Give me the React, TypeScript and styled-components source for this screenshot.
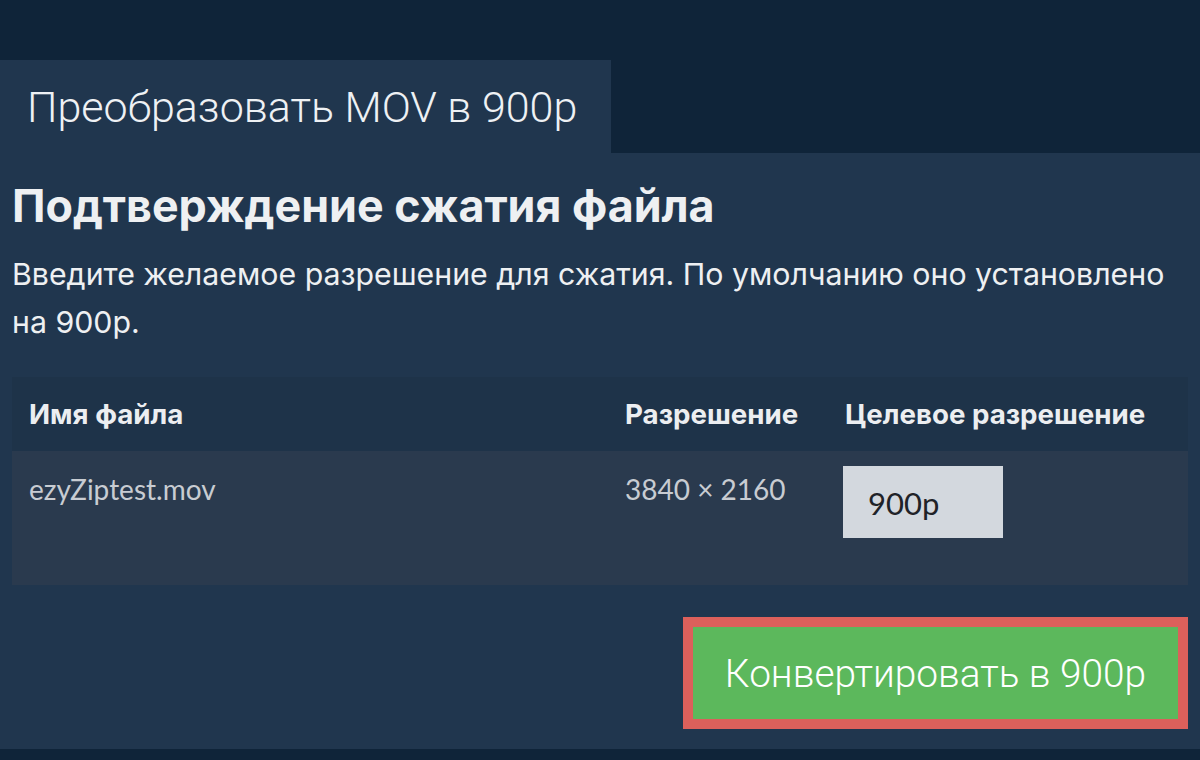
import React from "react";
import styled, { createGlobalStyle } from "styled-components";

const Global = createGlobalStyle`
  html, body { margin: 0; padding: 0; background: #0f2439; }
  body { font-family: Inter, "Noto Sans", sans-serif; }
  * { box-sizing: border-box; }
`;

const Page = styled.div`
  width: 1200px;
  height: 760px;
  background: #0f2439;
  padding-top: 60px;
  display: flex;
  flex-direction: column;
`;

const Tab = styled.div`
  width: 611px;
  height: 93px;
  background: #20364e;
  display: flex;
  align-items: center;
  padding-left: 27px;
  font-family: Roboto, sans-serif;
  font-weight: 300;
  font-size: 43px;
  color: #eef1f4;
`;

const Panel = styled.div`
  width: 1200px;
  height: 596px;
  background: #20364e;
  padding: 0 12px 20px 12px;
  display: flex;
  flex-direction: column;
`;

const Heading = styled.h1`
  margin: 29px 0 0 0;
  font-family: Inter, sans-serif;
  font-weight: 700;
  font-size: 44.8px;
  line-height: 48px;
  color: #eef0f2;
`;

const Intro = styled.p`
  margin: 20px 0 0 0;
  font-family: Inter, sans-serif;
  font-weight: 400;
  font-size: 30.3px;
  line-height: 48px;
  color: #eef0f2;
`;

const Table = styled.div`
  margin-top: 31px;
  display: grid;
  grid-template-columns: 596px 220px 1fr;
`;

const HeadCell = styled.div`
  background: #1e3349;
  height: 74px;
  display: flex;
  align-items: center;
  padding-left: 17px;
  font-family: Inter, sans-serif;
  font-weight: 700;
  font-size: 27.7px;
  color: #eceef1;
`;

const Cell = styled.div`
  background: #2a3a4e;
  height: 134px;
  padding: 23px 0 0 17px;
  font-family: Lato, sans-serif;
  font-size: 28px;
  line-height: 30px;
  color: #c8ccd2;
`;

const InputCell = styled(Cell)`
  padding-top: 15px;
  padding-left: 15px;
`;

const ResInput = styled.div`
  width: 160px;
  height: 72px;
  background: #d3d8de;
  display: flex;
  align-items: center;
  padding-left: 25px;
  font-family: Lato, sans-serif;
  font-size: 31px;
  color: #1f2328;
  padding-top: 2px;
`;

const Actions = styled.div`
  margin-top: auto;
  display: flex;
  justify-content: flex-end;
`;

const ConvertButton = styled.button`
  width: 505px;
  height: 112px;
  border: 10px solid #dc605b;
  background: #5cb85c;
  color: #ffffff;
  font-family: Roboto, sans-serif;
  font-weight: 300;
  font-size: 38.8px;
  padding: 0;
  cursor: pointer;
`;

export default function App() {
  return (
    <>
      <Global />
      <Page>
        <Tab>Преобразовать MOV в 900p</Tab>
        <Panel>
          <Heading>Подтверждение сжатия файла</Heading>
          <Intro>
            Введите желаемое разрешение для сжатия. По умолчанию оно установлено
            на 900p.
          </Intro>
          <Table>
            <HeadCell>Имя файла</HeadCell>
            <HeadCell>Разрешение</HeadCell>
            <HeadCell>Целевое разрешение</HeadCell>
            <Cell>ezyZiptest.mov</Cell>
            <Cell>3840 × 2160</Cell>
            <InputCell>
              <ResInput>900p</ResInput>
            </InputCell>
          </Table>
          <Actions>
            <ConvertButton>Конвертировать в 900p</ConvertButton>
          </Actions>
        </Panel>
      </Page>
    </>
  );
}
